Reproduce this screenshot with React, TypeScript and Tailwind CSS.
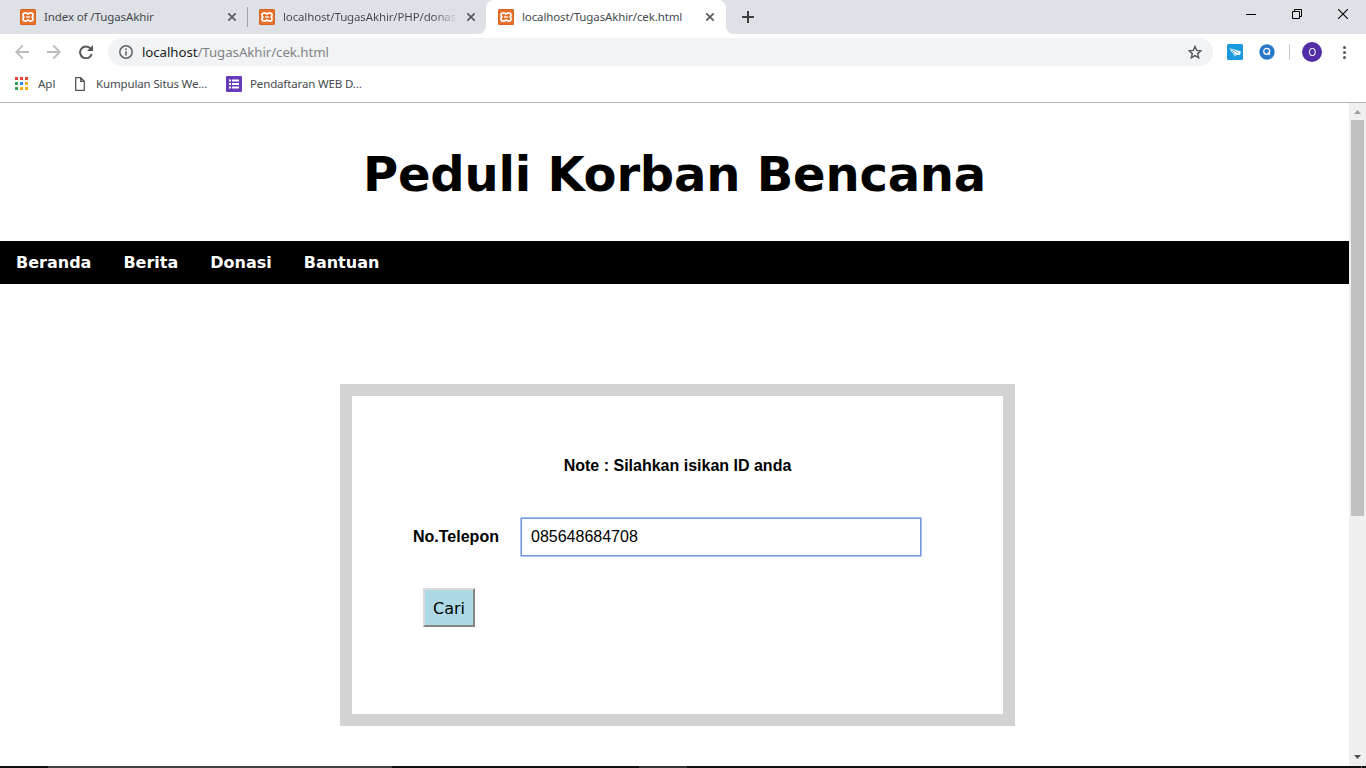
import React from "react";

function Xampp() {
  return (
    <svg className="block h-4 w-4 shrink-0" viewBox="0 0 16 16">
      <rect width="16" height="16" rx="1.5" fill="#e8702a" />
      <rect x="0.5" y="0.5" width="15" height="15" rx="1" fill="none" stroke="#c9601f" strokeOpacity="0.6" />
      <path
        d="M8 5.200C7.300 4.100 6.500 3.800 5.500 3.800 4 3.800 3 4.700 3 6c0 .8.300 1.500.9 2-.6.5-.9 1.200-.9 2 0 1.300 1 2.200 2.500 2.200 1 0 1.800-.3 2.500-1.400.7 1.100 1.500 1.400 2.500 1.400 1.500 0 2.500-.9 2.500-2.200 0-.8-.3-1.500-.9-2 .6-.5.9-1.200.9-2 0-1.300-1-2.200-2.500-2.200-1 0-1.800.3-2.500 1.400z"
        fill="none"
        stroke="#fff"
        strokeWidth="1.7"
        strokeLinejoin="round"
      />
      <path d="M6 8h4" stroke="#fff" strokeWidth="1.300" />
    </svg>
  );
}

function Close() {
  return (
    <svg className="block h-2 w-2 shrink-0" viewBox="0 0 8 8">
      <path d="M.3.3l7.4 7.4M7.700.3L.3 7.700" stroke="#54585d" strokeWidth="1.6" />
    </svg>
  );
}

function TabBar() {
  return (
    <div className="flex h-[34px] bg-[#dee1e6]">
      <div className="flex w-[247px] items-center pl-5 pr-[11px] text-[#45494d]">
        <Xampp />
        <span className="ml-2 grow whitespace-nowrap text-[11.5px] tracking-[-0.11px]">Index of /TugasAkhir</span>
        <Close />
      </div>
      <div className="mt-[7px] h-5 w-px bg-[#a0a3a8]" />
      <div className="flex w-[238px] items-center pl-[11px] pr-[11px] text-[#45494d]">
        <Xampp />
        <span className="ml-2 w-[175px] whitespace-nowrap bg-linear-to-r from-[#45494d] from-86% to-[#dee1e6] bg-clip-text text-[11.5px] tracking-[-0.14px] text-transparent">
          localhost/TugasAkhir/PHP/donas
        </span>
        <span className="ml-auto"><Close /></span>
      </div>
      <div className="relative flex w-[240px] items-center rounded-t-lg bg-white pl-3 pr-3 text-[#45494d]">
        <svg className="absolute bottom-0 -left-2 h-2 w-2" viewBox="0 0 8 8"><path d="M8 0v8H0a8 8 0 0 0 8-8z" fill="#fff" /></svg>
        <svg className="absolute bottom-0 -right-2 h-2 w-2" viewBox="0 0 8 8"><path d="M0 0v8h8A8 8 0 0 1 0 0z" fill="#fff" /></svg>
        <Xampp />
        <span className="ml-2 grow whitespace-nowrap text-[11.5px] tracking-[-0.12px]">localhost/TugasAkhir/cek.html</span>
        <Close />
      </div>
      <svg className="mt-[11px] ml-4 h-3 w-3" viewBox="0 0 12 12"><path d="M6 0v12M0 6h12" stroke="#3c4043" strokeWidth="2" /></svg>
      <div className="mt-[9px] mr-[18px] ml-auto flex gap-9">
        <svg className="h-[10px] w-[10px]" viewBox="0 0 10 10"><path d="M0 5.500h10" stroke="#000" /></svg>
        <svg className="h-[10px] w-[10px]" viewBox="0 0 10 10"><path d="M.5 2.500h7v7h-7zM2.500 2.500v-2h7v7h-2" fill="none" stroke="#000" /></svg>
        <svg className="h-[10px] w-[10px]" viewBox="0 0 10 10"><path d="M0 0l10 10M10 0L0 10" stroke="#000" strokeWidth="1.1" /></svg>
      </div>
    </div>
  );
}

function Toolbar() {
  return (
    <div className="flex h-9 items-center">
      <svg className="ml-[15px] h-4 w-[14px]" viewBox="0 0 14 16" fill="none" stroke="#babcbe" strokeWidth="1.8"><path d="M14 8H1.500M7.700 1.500L1.200 8l6.500 6.500" /></svg>
      <svg className="ml-[18px] h-4 w-[14px]" viewBox="0 0 14 16" fill="none" stroke="#babcbe" strokeWidth="1.8"><path d="M0 8h12.500M6.300 1.500L12.800 8l-6.500 6.500" /></svg>
      <svg className="ml-[18px] h-[14px] w-[14px]" viewBox="0 0 14 14"><path d="M11.700 3.800A5.900 5.900 0 1 0 12.700 9" fill="none" stroke="#54585d" strokeWidth="2" /><path d="M14 0v6H8z" fill="#54585d" /></svg>
      <div className="ml-[15px] flex h-7 w-[1105px] items-center rounded-full bg-[#f1f3f4] pr-[11px] pl-[11px]">
        <svg className="h-[14px] w-[14px]" viewBox="0 0 14 14"><circle cx="7" cy="7" r="6.200" fill="none" stroke="#5f6368" strokeWidth="1.5" /><path d="M7 6.200v4.300M7 3.400v1.600" stroke="#5f6368" strokeWidth="1.600" /></svg>
        <span className="ml-[9px] pt-px whitespace-nowrap text-[13.300px] tracking-[-0.08px] text-[#808488]"><span className="text-[#202124]">localhost</span>/TugasAkhir/cek.html</span>
        <svg className="ml-auto h-[14px] w-[14px]" viewBox="0 0 14 14"><path d="M7 1.400l1.700 4 4.300.4-3.300 2.800 1 4.200L7 10.600l-3.700 2.200 1-4.200L1 5.800l4.300-.4z" fill="none" stroke="#54585d" strokeWidth="1.400" /></svg>
      </div>
      <svg className="ml-[14px] h-4 w-4" viewBox="0 0 16 16"><rect width="16" height="16" rx="1.500" fill="#1b9ade" /><path d="M2.500 4l11.300 3.500-.6 3.300-3.700.3-2.200 1.700L6.500 10 4 7z" fill="#fff" /><path d="M3 4.400l8.500 4.800M5 7l3 3.200-.6 2.300" fill="none" stroke="#1b9ade" strokeWidth="0.700" /></svg>
      <svg className="ml-4 h-4 w-4" viewBox="0 0 16 16"><circle cx="8" cy="8" r="7.700" fill="#2878c9" /><circle cx="7.700" cy="7.300" r="3" fill="none" stroke="#fff" strokeWidth="1.200" /><path d="M8.700 8.500l2.300 2.300" stroke="#fff" strokeWidth="1.200" /></svg>
      <div className="ml-[14px] h-4 w-px bg-[#cbcdd1]" />
      <div className="ml-3 flex h-5 w-5 items-center justify-center rounded-full bg-[#512da8] text-[11px] text-white"><span className="scale-x-90">O</span></div>
      <svg className="ml-[20px] h-[14px] w-1" viewBox="0 0 4 14" fill="#54585d"><circle cx="2.500" cy="2.500" r="1.500" /><circle cx="2.500" cy="7.500" r="1.500" /><circle cx="2.500" cy="12.500" r="1.500" /></svg>
    </div>
  );
}

const dots = ["#ea4335", "#ea4335", "#ea4335", "#34a05a", "#1e88f5", "#f9ab00", "#34a05a", "#f9ab00", "#f9ab00"];

function Bookmarks() {
  return (
    <div className="flex h-[33px] items-center border-b border-[#b2b4b6] pb-[5px] text-[11.5px] text-[#45494d]">
      <svg className="ml-[15px] h-[13px] w-[13px]" viewBox="0 0 13 13">
        {dots.map((c, i) => <rect key={i} x={(i % 3) * 5} y={Math.floor(i / 3) * 5} width="3" height="3" fill={c} />)}
      </svg>
      <span className="ml-[10px] w-[37px]">Apl</span>
      <svg className="h-[14px] w-[10px]" viewBox="0 0 10 14"><path d="M.7.7h5L9.300 4.300v9H.7zM5.700.7v3.600h3.600" fill="none" stroke="#54585d" strokeWidth="1.300" /></svg>
      <span className="ml-[11px] w-[130px] whitespace-nowrap tracking-[-0.14px]">Kumpulan Situs We...</span>
      <svg className="h-4 w-4" viewBox="0 0 16 16"><rect width="16" height="16" rx="1" fill="#673ab7" /><path d="M3 4.500h2M6 4.500h7M3 8h2M6 8h7M3 11.500h2M6 11.500h7" stroke="#fff" strokeWidth="1.800" /></svg>
      <span className="ml-2 whitespace-nowrap tracking-[-0.14px]">Pendaftaran WEB D...</span>
    </div>
  );
}

function Page() {
  return (
    <main className="flex w-[1349px] flex-col text-black">
      <h1 className="mt-[42px] h-24 text-center font-['DejaVu_Sans'] text-[48px] leading-[58px] font-bold tracking-[-0.2px]">Peduli Korban Bencana</h1>
      <nav className="flex h-[43px] items-center gap-8 bg-black pt-px pl-4 font-['DejaVu_Sans'] text-[16px] font-bold text-white">
        <a>Beranda</a><a>Berita</a><a>Donasi</a><a>Bantuan</a>
      </nav>
      <section className="mt-[100px] ml-[340px] h-[342px] w-[675px] border-[12px] border-[#d3d3d3] font-['Liberation_Sans'] text-[16px]">
        <p className="mt-[61px] text-center leading-[18px] font-bold">Note : Silahkan isikan ID anda</p>
        <div className="mt-[42px] ml-[61px] flex h-[39px] items-center">
          <label className="w-[107px] font-bold">No.Telepon</label>
          <input className="h-[40px] w-[402px] rounded-[1px] border border-[#a6c3f8] px-[10px] inset-ring inset-ring-[#7798d4] outline-none" defaultValue="085648684708" />
        </div>
        <button className="mt-8 ml-[71px] block h-[39px] w-[52px] border-2 border-t-[#d9d9d9] border-r-[#858585] border-b-[#858585] border-l-[#d9d9d9] bg-[#add8e6] pt-[2px] font-['DejaVu_Sans'] text-[16px]">Cari</button>
      </section>
    </main>
  );
}

export default function App() {
  return (
    <div className="flex h-[768px] w-[1366px] flex-col overflow-hidden bg-white font-['Noto_Sans',sans-serif]">
      <TabBar />
      <Toolbar />
      <Bookmarks />
      <div className="flex h-[663px]">
        <Page />
        <div className="flex w-[17px] flex-col items-center bg-[#f0f0f0]">
          <svg className="mt-[7px] h-1 w-[7px]" viewBox="0 0 7 4"><path d="M0 4L3.500 0 7 4z" fill="#a0a0a0" /></svg>
          <div className="mt-[6px] h-[396px] w-[13px] bg-[#c1c1c1]" />
          <svg className="mt-auto mb-[7px] h-1 w-[7px]" viewBox="0 0 7 4"><path d="M0 0h7L3.500 4z" fill="#505050" /></svg>
        </div>
      </div>
      <div className="flex h-[2px] bg-[#101014]">
        <div className="ml-12 h-full w-[344px] bg-[#414144]" />
        <div className="ml-[247px] h-full w-12 bg-[#353538]" />
        <div className="mr-1 ml-auto h-full w-px bg-[#6a6a6c]" />
      </div>
    </div>
  );
}
